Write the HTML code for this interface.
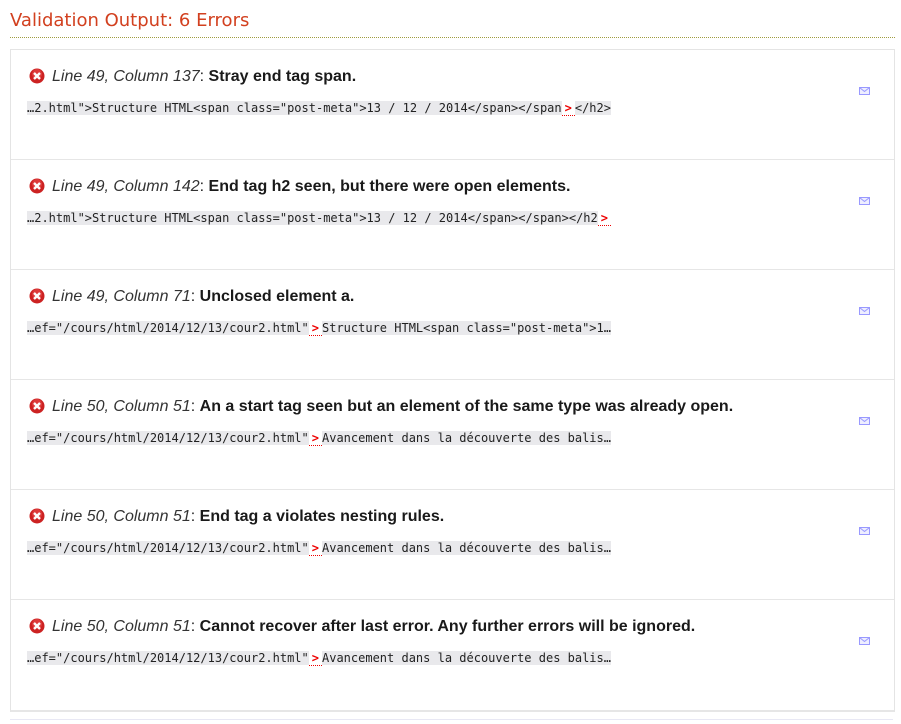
<!DOCTYPE html>
<html><head><meta charset="utf-8"><style>
body{margin:0;background:#fff;width:901px;height:723px;overflow:hidden;position:relative;font-family:"Liberation Sans",Arial,sans-serif}
h2{position:absolute;left:10px;top:8px;margin:0;width:885px;font:normal 18px "DejaVu Sans",Verdana,sans-serif;color:#d2401f;border-bottom:1px dotted #a09c40;padding-bottom:3px;line-height:26px;letter-spacing:0px}
.box{position:absolute;left:10px;width:883px;top:49px;height:660px;border:1px solid #e4e4e4;border-bottom:2px solid #e6e6e6}
.row{position:absolute;left:0;width:883px;height:109px;border-bottom:1px solid #e6e6e6}
.ic{position:absolute;left:18px;top:18px;width:16px;height:16px}
.msg{position:absolute;left:41px;top:18px;font-size:16px;color:#222;white-space:nowrap}
.msg i{color:#333}
.msg b{color:#1a1a1a}
.code{position:absolute;left:16px;top:51px;height:14px;background:#e9e9ec;font:12px/14px "DejaVu Sans Mono","Liberation Mono",monospace;color:#222;white-space:pre}
.code em{font-style:normal;color:#e00;font-weight:bold;background:#fff;border-bottom:1px dotted #e00;padding:0 3px}
.mail{position:absolute;left:848px;top:37px}
.foot{position:absolute;left:10px;top:719px;width:883px;height:4px;border-top:1px solid #e8e8f4}
</style></head><body>
<h2>Validation Output: 6 Errors</h2>
<div class="box">
<div class="row" style="top:0">
<svg class="ic" viewBox="0 0 16 16"><circle cx="8" cy="8" r="7.5" fill="#c22"/><circle cx="8" cy="6" r="5" fill="#e55" opacity=".5"/><path d="M5 5L11 11M11 5L5 11" stroke="#fff" stroke-width="2.4"/></svg>
<div class="msg"><i>Line 49, Column 137</i>: <b>Stray end tag span.</b></div>
<div class="code">…2.html"&gt;Structure HTML&lt;span class="post-meta"&gt;13 / 12 / 2014&lt;/span&gt;&lt;/span<em>&gt;</em>&lt;/h2&gt;</div>
<svg class="mail" width="11" height="8" viewBox="0 0 11 8"><rect x=".5" y=".5" width="10" height="7" fill="#eef" stroke="#99f"/><path d="M.5 .5L5.5 4.5L10.5 .5" fill="none" stroke="#99f"/></svg>
</div>
<div class="row" style="top:110px">
<svg class="ic" viewBox="0 0 16 16"><circle cx="8" cy="8" r="7.5" fill="#c22"/><circle cx="8" cy="6" r="5" fill="#e55" opacity=".5"/><path d="M5 5L11 11M11 5L5 11" stroke="#fff" stroke-width="2.4"/></svg>
<div class="msg"><i>Line 49, Column 142</i>: <b>End tag h2 seen, but there were open elements.</b></div>
<div class="code">…2.html"&gt;Structure HTML&lt;span class="post-meta"&gt;13 / 12 / 2014&lt;/span&gt;&lt;/span&gt;&lt;/h2<em>&gt;</em></div>
<svg class="mail" width="11" height="8" viewBox="0 0 11 8"><rect x=".5" y=".5" width="10" height="7" fill="#eef" stroke="#99f"/><path d="M.5 .5L5.5 4.5L10.5 .5" fill="none" stroke="#99f"/></svg>
</div>
<div class="row" style="top:220px">
<svg class="ic" viewBox="0 0 16 16"><circle cx="8" cy="8" r="7.5" fill="#c22"/><circle cx="8" cy="6" r="5" fill="#e55" opacity=".5"/><path d="M5 5L11 11M11 5L5 11" stroke="#fff" stroke-width="2.4"/></svg>
<div class="msg"><i>Line 49, Column 71</i>: <b>Unclosed element a.</b></div>
<div class="code">…ef="/cours/html/2014/12/13/cour2.html"<em>&gt;</em>Structure HTML&lt;span class="post-meta"&gt;1…</div>
<svg class="mail" width="11" height="8" viewBox="0 0 11 8"><rect x=".5" y=".5" width="10" height="7" fill="#eef" stroke="#99f"/><path d="M.5 .5L5.5 4.5L10.5 .5" fill="none" stroke="#99f"/></svg>
</div>
<div class="row" style="top:330px">
<svg class="ic" viewBox="0 0 16 16"><circle cx="8" cy="8" r="7.5" fill="#c22"/><circle cx="8" cy="6" r="5" fill="#e55" opacity=".5"/><path d="M5 5L11 11M11 5L5 11" stroke="#fff" stroke-width="2.4"/></svg>
<div class="msg"><i>Line 50, Column 51</i>: <b>An a start tag seen but an element of the same type was already open.</b></div>
<div class="code">…ef="/cours/html/2014/12/13/cour2.html"<em>&gt;</em>Avancement dans la découverte des balis…</div>
<svg class="mail" width="11" height="8" viewBox="0 0 11 8"><rect x=".5" y=".5" width="10" height="7" fill="#eef" stroke="#99f"/><path d="M.5 .5L5.5 4.5L10.5 .5" fill="none" stroke="#99f"/></svg>
</div>
<div class="row" style="top:440px">
<svg class="ic" viewBox="0 0 16 16"><circle cx="8" cy="8" r="7.5" fill="#c22"/><circle cx="8" cy="6" r="5" fill="#e55" opacity=".5"/><path d="M5 5L11 11M11 5L5 11" stroke="#fff" stroke-width="2.4"/></svg>
<div class="msg"><i>Line 50, Column 51</i>: <b>End tag a violates nesting rules.</b></div>
<div class="code">…ef="/cours/html/2014/12/13/cour2.html"<em>&gt;</em>Avancement dans la découverte des balis…</div>
<svg class="mail" width="11" height="8" viewBox="0 0 11 8"><rect x=".5" y=".5" width="10" height="7" fill="#eef" stroke="#99f"/><path d="M.5 .5L5.5 4.5L10.5 .5" fill="none" stroke="#99f"/></svg>
</div>
<div class="row" style="top:550px;border-bottom:none">
<svg class="ic" viewBox="0 0 16 16"><circle cx="8" cy="8" r="7.5" fill="#c22"/><circle cx="8" cy="6" r="5" fill="#e55" opacity=".5"/><path d="M5 5L11 11M11 5L5 11" stroke="#fff" stroke-width="2.4"/></svg>
<div class="msg"><i>Line 50, Column 51</i>: <b>Cannot recover after last error. Any further errors will be ignored.</b></div>
<div class="code">…ef="/cours/html/2014/12/13/cour2.html"<em>&gt;</em>Avancement dans la découverte des balis…</div>
<svg class="mail" width="11" height="8" viewBox="0 0 11 8"><rect x=".5" y=".5" width="10" height="7" fill="#eef" stroke="#99f"/><path d="M.5 .5L5.5 4.5L10.5 .5" fill="none" stroke="#99f"/></svg>
</div>
</div>
<div class="foot"></div>
</body></html>
